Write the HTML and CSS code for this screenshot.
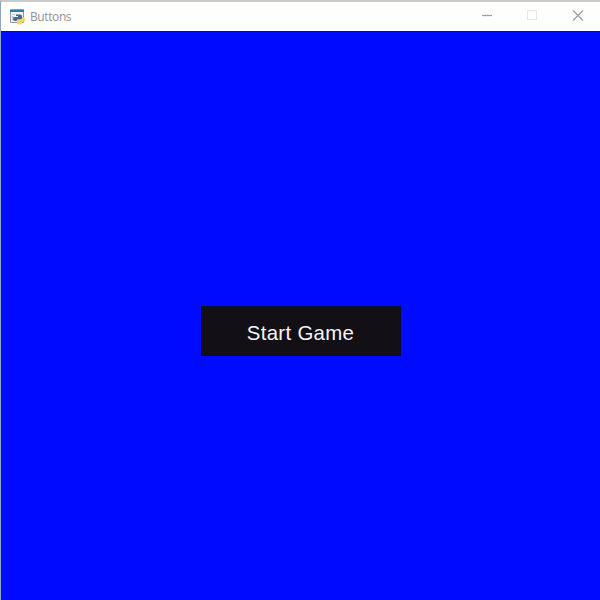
FILE: index.html
```html
<!DOCTYPE html>
<html lang="en">
<head>
<meta charset="utf-8">
<title>Buttons</title>
<link rel="stylesheet" href="styles.css">
</head>
<body>
<div class="window">
  <header class="titlebar">
    <svg class="app-icon" width="16" height="16" viewBox="0 0 16 16">
      <path d="M1.500 1h13v12.500h-13z" fill="#eef1f5" stroke="#8798a8"/>
      <path d="M1 .5h14v2.500H1z" fill="#287dba"/>
      <path d="M3 5h3v1H3zM3 7h2v4H3z" fill="#c5cdd5"/>
      <path d="M7 5.500h4q2 0 2 2V9q0 1.500-1.500 1.500H9Q7.500 10.500 7.500 12H6q-2 0-2-2t2-2h3V7H7z" fill="#45678e"/>
      <path d="M13 8h1q2 0 2 2.500T14 13h-1v1q0 1.500-2.500 1.500T8 14v-2q0-1.500 1.500-1.500h2Q13 10.500 13 9z" fill="#f5d36b"/>
    </svg>
    <span class="title">Buttons</span>
    <div class="controls">
      <svg class="control" width="46" height="29" viewBox="0 0 46 29"><path d="M12 13.500h10" stroke="#a0a0a0" stroke-width="1.300"/></svg>
      <svg class="control" width="46" height="29" viewBox="0 0 46 29"><path d="M11.500 8.500h9v9h-9z" fill="none" stroke="#e6e6ea"/></svg>
      <svg class="control" width="46" height="29" viewBox="0 0 46 29"><path d="M11 8.500l10 10M21 8.500l-10 10" fill="none" stroke="#a0a0a0" stroke-width="1.300"/></svg>
    </div>
  </header>
  <main class="screen">
    <button class="start" type="button">Start Game</button>
  </main>
</div>
</body>
</html>
```
FILE: styles.css
```css
* { box-sizing: border-box; }
body { margin: 0; }
.window {
  display: flex;
  flex-direction: column;
  width: 600px;
  height: 600px;
  overflow: hidden;
  border-top: 2px solid #cacaca;
  border-left: 1px solid #8da5c2;
  background: #fefefc;
}
.titlebar {
  display: flex;
  flex: 0 0 29px;
  align-items: center;
  padding-left: 8px;
}
.app-icon { flex: none; }
.title {
  margin-left: 5px;
  color: #949494;
  font: 12px/16px "Open Sans", "Noto Sans", sans-serif;
  letter-spacing: -0.4px;
}
.controls {
  display: flex;
  width: 130px;
  margin-left: auto;
}
.control { flex: none; }
.screen {
  display: flex;
  flex: 1;
  justify-content: center;
  align-items: flex-start;
  padding-top: 274px;
  border-top: 1px solid #0006c8;
  background: #000aff;
}
.start {
  width: 200px;
  height: 50px;
  padding: 4px 0 0;
  border: 1px solid #0b0a32;
  background: #121014;
  color: #f5f5fc;
  font: 20.4px/24px "Liberation Sans", Arial, sans-serif;
  letter-spacing: 0.3px;
}
```
